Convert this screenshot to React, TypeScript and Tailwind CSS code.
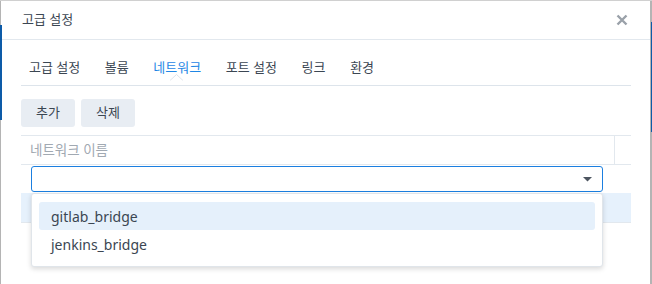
import React from "react";

const tabs = ["고급 설정", "볼륨", "네트워크", "포트 설정", "링크", "환경"];

export default function App() {
  return (
    <div
      className="relative w-[652px] h-[284px] overflow-hidden bg-white"
      style={{ fontFamily: '"Noto Sans", "Noto Sans CJK KR", sans-serif' }}
    >
      {/* window frame edges */}
      <div className="absolute left-0 top-0 h-full w-[1px] bg-[#b4b4b4]" />
      <div className="absolute left-0 top-[25px] h-[95px] w-[2px] bg-[#0d5ba8]" />
      <div className="absolute right-0 top-0 h-full w-[2px] bg-[#b4b4b4]" />
      <div className="absolute right-0 top-[22px] h-[110px] w-[1px] bg-[#0d5ba8]" />
      <div className="absolute left-0 top-0 w-full h-[1px] bg-[#d0d0d0]" />

      <div className="flex flex-col pl-[1px] pr-[2px]">
        {/* header */}
        <div className="flex h-[40px] items-center justify-between border-b border-[#e2e8ee] pl-[21px] pr-[22px]">
          <span className="text-[13px] text-[#3b4652]">고급 설정</span>
          <svg width="12" height="12" viewBox="0 0 12 12">
            <path d="M1.5 1.5 L10.5 10.5 M10.5 1.5 L1.5 10.5" stroke="#9aa1a9" strokeWidth="2.4" strokeLinecap="butt" />
          </svg>
        </div>

        <div className="flex flex-col pl-[20px] pr-[19px]">
          {/* tabs */}
          <div className="relative flex h-[46px] items-center gap-[24.6px] border-b border-[#dde4eb] pl-[8px] pt-[10px]">
            {tabs.map((t, i) => (
              <div
                key={t}
                className={
                  "relative text-[13px] " +
                  (i === 2 ? "text-[#1f87e5]" : "text-[#3b4652]")
                }
              >
                {t}
                {i === 2 && (
                  <svg
                    className="absolute left-1/2 -translate-x-1/2 top-[16px]"
                    width="14"
                    height="7"
                    viewBox="0 0 14 7"
                  >
                    <path d="M0 6.5 L6.5 0.5 L13 6.5" fill="white" stroke="#dde4eb" strokeWidth="1" />
                    <rect x="0.5" y="6.5" width="12" height="1" fill="white" />
                  </svg>
                )}
              </div>
            ))}
          </div>

          {/* buttons */}
          <div className="flex gap-[6px] pt-[13px] pb-[8px]">
            <button className="h-[28px] w-[54px] rounded-[3px] bg-[#e8edf3] text-[13px] text-[#3b4652]">추가</button>
            <button className="h-[28px] w-[54px] rounded-[3px] bg-[#e8edf3] text-[13px] text-[#3b4652]">삭제</button>
          </div>

          {/* table */}
          <div className="flex flex-col">
            <div className="flex h-[30px] border-y border-[#e2e8ee]">
              <div className="flex flex-1 items-center pl-[9px] text-[13.5px] text-[#a1a9b2]">네트워크 이름</div>
              <div className="w-[17px] border-l border-[#e2e8ee]" />
            </div>
            <div className="flex h-[28px] items-center pl-[10px] pr-[28px]">
              <div className="flex h-[26px] flex-1 items-center justify-end rounded-[3px] border border-[#1b7fe0] pr-[10px]">
                <svg width="9" height="5" viewBox="0 0 9 5">
                  <path d="M0 0 L9 0 L4.5 4.5 Z" fill="#4d5560" />
                </svg>
              </div>
            </div>
            <div className="relative h-[30px] border-b border-[#e2e8ee] bg-[#e6f1fc]">
              {/* dropdown menu overlay */}
              <div className="absolute left-[10px] top-0 z-10 flex w-[572px] flex-col rounded-[3px] border border-[#e0e5ea] bg-white px-[7px] py-[8px] shadow-[0_2px_5px_rgba(0,0,0,0.15)]">
                <div className="flex h-[28px] items-center rounded-[3px] bg-[#e5f0fb] pl-[12px] text-[14px] text-[#3b4652]">gitlab_bridge</div>
                <div className="flex h-[28px] items-center pl-[12px] text-[14px] text-[#3b4652]">jenkins_bridge</div>
              </div>
            </div>
          </div>
        </div>
      </div>
    </div>
  );
}
